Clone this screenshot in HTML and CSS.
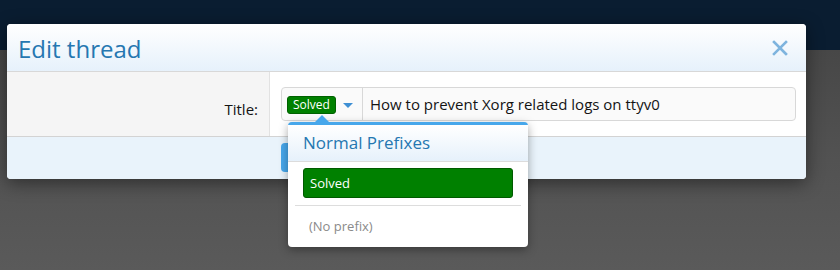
FILE: index.html
```html
<!DOCTYPE html>
<html>
<head>
<meta charset="utf-8">
<link rel="stylesheet" href="styles.css">
</head>
<body>
<div class="backdrop">
  <div class="band"></div>
  <div class="page"></div>
</div>
<div class="overlay">
  <div class="modal">
    <div class="modal-head">
      <h1 class="modal-title">Edit thread</h1>
      <span class="close">
        <svg width="16" height="16" viewBox="0 0 16 16"><path d="M2 2 L14 14 M14 2 L2 14" stroke="#7eb4de" stroke-width="2.6" stroke-linecap="square"/></svg>
      </span>
    </div>
    <div class="form-row">
      <div class="label-col"><label class="label">Title:</label></div>
      <div class="input-col">
        <div class="input">
          <div class="prefix-btn">
            <span class="badge">Solved</span>
            <span class="caret"></span>
          </div>
          <div class="input-text">How to prevent Xorg related logs on ttyv0</div>
        </div>
      </div>
    </div>
    <div class="modal-foot">
      <span class="save-btn"></span>
    </div>
  </div>
  <div class="menu">
    <span class="menu-arrow"></span>
    <div class="menu-head">Normal Prefixes</div>
    <div class="menu-body">
      <div class="menu-item-solved">Solved</div>
      <div class="menu-sep"></div>
      <div class="menu-item-none">(No prefix)</div>
    </div>
  </div>
</div>
</body>
</html>
```

FILE: styles.css
```css
html, body {
  margin: 0;
  padding: 0;
}
body {
  width: 840px;
  height: 270px;
  overflow: hidden;
  position: relative;
  font-family: "Open Sans", "Noto Sans", sans-serif;
  background: #555;
}
.backdrop {
  display: flex;
  flex-direction: column;
  height: 270px;
}
.band {
  height: 50px;
  background: #0a1d31;
  flex: none;
}
.page {
  flex: 1;
  background: linear-gradient(#474747, #525252 50%, #5a5a5a);
}
.overlay {
  position: absolute;
  left: 0;
  top: 0;
  width: 840px;
  height: 270px;
}
.modal {
  position: absolute;
  left: 7px;
  top: 24px;
  width: 799px;
  background: #fff;
  border-radius: 4px;
  overflow: hidden;
  box-shadow: 0 4px 18px rgba(0, 0, 0, 0.45);
}
.modal-head {
  height: 47px;
  display: flex;
  align-items: center;
  justify-content: space-between;
  padding: 0 18px 0 11px;
  background: linear-gradient(#ffffff, #e6f1fb);
  border-bottom: 1px solid #d8d8d8;
}
.modal-title {
  margin: 0;
  font-weight: 400;
  font-size: 24px;
  color: #2577b1;
  line-height: 1;
  padding-top: 2px;
}
.close {
  display: flex;
  width: 16px;
  height: 16px;
  margin-top: 1px;
}
.form-row {
  display: flex;
  height: 64px;
  border-bottom: 1px solid #d3d3d3;
}
.label-col {
  width: 263px;
  background: #f5f5f5;
  border-right: 1px solid #e2e2e2;
  display: flex;
  justify-content: flex-end;
  padding: 27px 11px 0 0;
  box-sizing: border-box;
}
.label {
  font-size: 15px;
  color: #141414;
  line-height: 20px;
}
.input-col {
  flex: 1;
  padding: 15px 10px 0 11px;
}
.input {
  height: 34px;
  box-sizing: border-box;
  border: 1px solid #d8d8d8;
  border-radius: 4px;
  background: #fafafa;
  display: flex;
  align-items: stretch;
}
.prefix-btn {
  width: 81px;
  border-right: 1px solid #d8d8d8;
  display: flex;
  align-items: center;
  padding-left: 5px;
  box-sizing: border-box;
}
.badge {
  display: inline-block;
  background: #008000;
  border: 1px solid #006100;
  border-radius: 3px;
  color: #fff;
  font-size: 12px;
  line-height: 16px;
  padding: 0 5px;
  height: 16px;
  margin-top: 2px;
}
.caret {
  margin-left: 7px;
  margin-top: 2px;
  width: 0;
  height: 0;
  border-left: 5px solid transparent;
  border-right: 5px solid transparent;
  border-top: 5px solid #3e8fd4;
}
.input-text {
  display: flex;
  align-items: center;
  padding-left: 7px;
  font-size: 15px;
  color: #141414;
}
.modal-foot {
  height: 42px;
  background: #e9f3fb;
  padding: 6px 0 0 274px;
  box-sizing: border-box;
}
.save-btn {
  display: block;
  width: 120px;
  height: 29px;
  background: #47a7eb;
  border-radius: 4px;
}
.menu {
  position: absolute;
  left: 288px;
  top: 122px;
  width: 240px;
  height: 125px;
  background: #fff;
  border-top: 3px solid #47a7eb;
  border-radius: 4px;
  box-sizing: border-box;
  box-shadow: 0 3px 10px rgba(0, 0, 0, 0.35);
}
.menu-arrow {
  position: absolute;
  left: 27px;
  top: -10px;
  width: 0;
  height: 0;
  border-left: 7px solid transparent;
  border-right: 7px solid transparent;
  border-bottom: 7px solid #47a7eb;
}
.menu-head {
  height: 37px;
  box-sizing: border-box;
  padding: 7px 0 0 15px;
  font-size: 17px;
  color: #2577b1;
  line-height: 22px;
  background: linear-gradient(#ffffff, #e6f1fb);
  border-bottom: 1px solid #dcdcdc;
}
.menu-body {
  padding: 6px 7px 0 7px;
}
.menu-item-solved {
  margin: 0 8px;
  height: 30px;
  box-sizing: border-box;
  background: #008000;
  border: 1px solid #005a00;
  border-radius: 3px;
  color: #fff;
  font-size: 13px;
  line-height: 28px;
  padding-left: 6px;
}
.menu-sep {
  height: 1px;
  background: #dddddd;
  margin-top: 7px;
}
.menu-item-none {
  padding: 11px 0 0 14px;
  font-size: 13px;
  color: #8a8a8a;
  line-height: 18px;
}
```
